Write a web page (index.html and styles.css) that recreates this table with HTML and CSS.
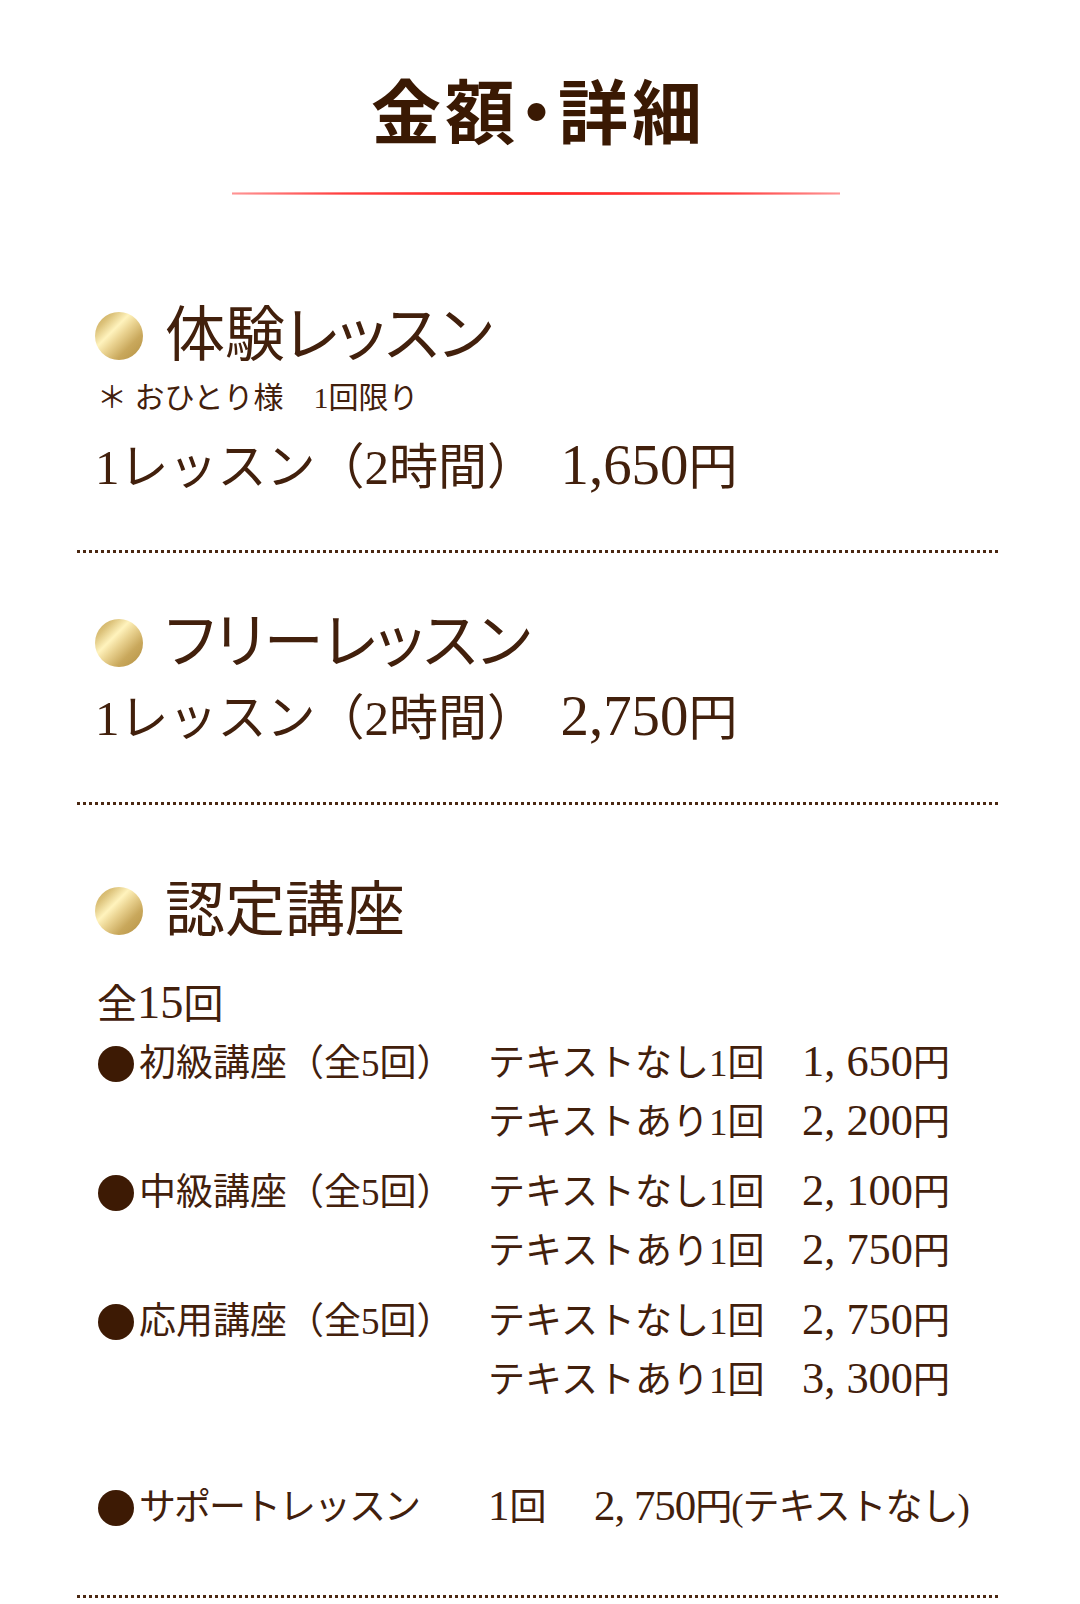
FILE: index.html
```html
<!DOCTYPE html>
<html lang="ja">
<head>
<meta charset="utf-8">
<title>金額・詳細</title>
<link rel="stylesheet" href="styles.css">
</head>
<body>
<div class="page">
  <header class="title-wrap">
    <h1 class="title">金額・詳細</h1>
    <div class="title-rule"></div>
  </header>

  <section class="plan plan-trial">
    <h2 class="plan-head"><span class="coin"></span>体験レッスン</h2>
    <p class="note">＊ おひとり様　1回限り</p>
    <p class="price">1レッスン（2時間）　<span class="num">1,650</span>円</p>
  </section>
  <div class="dots"></div>

  <section class="plan plan-free">
    <h2 class="plan-head"><span class="coin"></span>フリーレッスン</h2>
    <p class="price">1レッスン（2時間）　<span class="num">2,750</span>円</p>
  </section>
  <div class="dots"></div>

  <section class="plan plan-cert">
    <h2 class="plan-head"><span class="coin"></span>認定講座</h2>
    <p class="total">全<span class="num">15</span>回</p>

    <div class="course">
      <div class="course-name">初級講座（全5回）</div>
      <div class="options">
        <div class="option"><span class="option-name">テキストなし1回</span><span class="option-price"><span class="num">1, 650</span>円</span></div>
        <div class="option"><span class="option-name">テキストあり1回</span><span class="option-price"><span class="num">2, 200</span>円</span></div>
      </div>
    </div>
    <div class="course">
      <div class="course-name">中級講座（全5回）</div>
      <div class="options">
        <div class="option"><span class="option-name">テキストなし1回</span><span class="option-price"><span class="num">2, 100</span>円</span></div>
        <div class="option"><span class="option-name">テキストあり1回</span><span class="option-price"><span class="num">2, 750</span>円</span></div>
      </div>
    </div>
    <div class="course">
      <div class="course-name">応用講座（全5回）</div>
      <div class="options">
        <div class="option"><span class="option-name">テキストなし1回</span><span class="option-price"><span class="num">2, 750</span>円</span></div>
        <div class="option"><span class="option-name">テキストあり1回</span><span class="option-price"><span class="num">3, 300</span>円</span></div>
      </div>
    </div>

    <div class="support">
      <span class="course-name support-name">サポートレッスン</span>
      <span class="support-count"><span class="num">1</span>回</span>
      <span class="support-price"><span class="num">2, 750</span>円(テキストなし)</span>
    </div>
  </section>
  <div class="dots dots-last"></div>
</div>
</body>
</html>
```

FILE: styles.css
```css
html, body {
  margin: 0;
  padding: 0;
  background: #ffffff;
}

body {
  color: #42200c;
  font-family: "Liberation Serif", "Noto Sans CJK JP", serif;
}

.page {
  width: 1080px;
  padding: 0 80px 0 77px;
  box-sizing: border-box;
  overflow: hidden;
}

p, h1, h2 {
  margin: 0;
  font-weight: 400;
}

.num {
  font-family: "Liberation Serif", serif;
  font-size: 1.16em;
  line-height: 0;
}

/* Title */
.title-wrap {
  display: flex;
  flex-direction: column;
  align-items: center;
  padding-top: 74px;
}

.title {
  font-family: "Noto Sans CJK JP", sans-serif;
  font-weight: 700;
  font-size: 70px;
  line-height: 1;
  color: #3a1903;
  font-feature-settings: "palt";
  letter-spacing: 4px;
}

.title-rule {
  width: 608px;
  height: 3px;
  margin-top: 48px;
  margin-left: -6px;
  background: radial-gradient(ellipse at center, #ff2424 0%, rgba(255, 40, 40, 0.9) 45%, rgba(255, 90, 90, 0.35) 85%, rgba(255, 255, 255, 0) 100%);
}

/* Plans */
.plan {
  padding-left: 18px;
}

.plan-head {
  display: flex;
  align-items: center;
  font-size: 60px;
  line-height: 60px;
  color: #42200c;
  font-feature-settings: "palt";
}

.coin {
  width: 48px;
  height: 48px;
  border-radius: 50%;
  margin-right: 22px;
  flex: none;
  background: linear-gradient(135deg, #c29f4c 0%, #dcc27a 20%, #fff3bd 38%, #ead391 52%, #c9a85c 72%, #b39042 100%);
}

.plan-trial .plan-head {
  margin-top: 111px;
}

.note {
  font-size: 30px;
  line-height: 30px;
  margin-top: 17px;
  padding-left: 2px;
}

.price {
  font-size: 49px;
  line-height: 49px;
}

.plan-trial .price {
  margin-top: 30px;
}

.plan-free .plan-head {
  margin-top: 60px;
}

.plan-free .price {
  margin-top: 21px;
}

.plan-cert .plan-head {
  margin-top: 76px;
}

.dots {
  height: 3px;
  width: 923px;
  background-image: linear-gradient(to right, #4a2812 50%, rgba(255, 255, 255, 0) 50%);
  background-size: 6px 3px;
  background-repeat: repeat-x;
}

.plan-trial + .dots {
  margin-top: 58px;
}

.plan-free + .dots {
  margin-top: 59px;
}

.dots-last {
  margin-top: 58px;
}

/* Certification courses */
.total {
  font-size: 40px;
  line-height: 40px;
  margin-top: 44px;
  padding-left: 2px;
}

.course {
  display: grid;
  grid-template-columns: 393px 1fr;
  font-size: 37px;
  line-height: 59px;
}

.course:first-of-type {
  margin-top: 9px;
}

.course + .course {
  margin-top: 11px;
}

.course-name {
  display: flex;
  align-items: center;
  white-space: nowrap;
  align-self: start;
  height: 59px;
}

.course-name::before {
  content: "";
  width: 36px;
  height: 36px;
  border-radius: 50%;
  background: #3d1a04;
  margin: 0 5px 0 3px;
  flex: none;
}

.option {
  display: flex;
  white-space: nowrap;
}

.option-name {
  width: 314px;
  flex: none;
}

.option-price .num {
  font-size: 1.2em;
}

/* Support lesson */
.support {
  display: flex;
  align-items: center;
  font-size: 37px;
  line-height: 59px;
  margin-top: 68px;
  white-space: nowrap;
}

.support-name {
  width: 393px;
  flex: none;
  letter-spacing: -2px;
}

.support-count {
  width: 106px;
  flex: none;
}

.support-price {
  letter-spacing: -1px;
}
```
